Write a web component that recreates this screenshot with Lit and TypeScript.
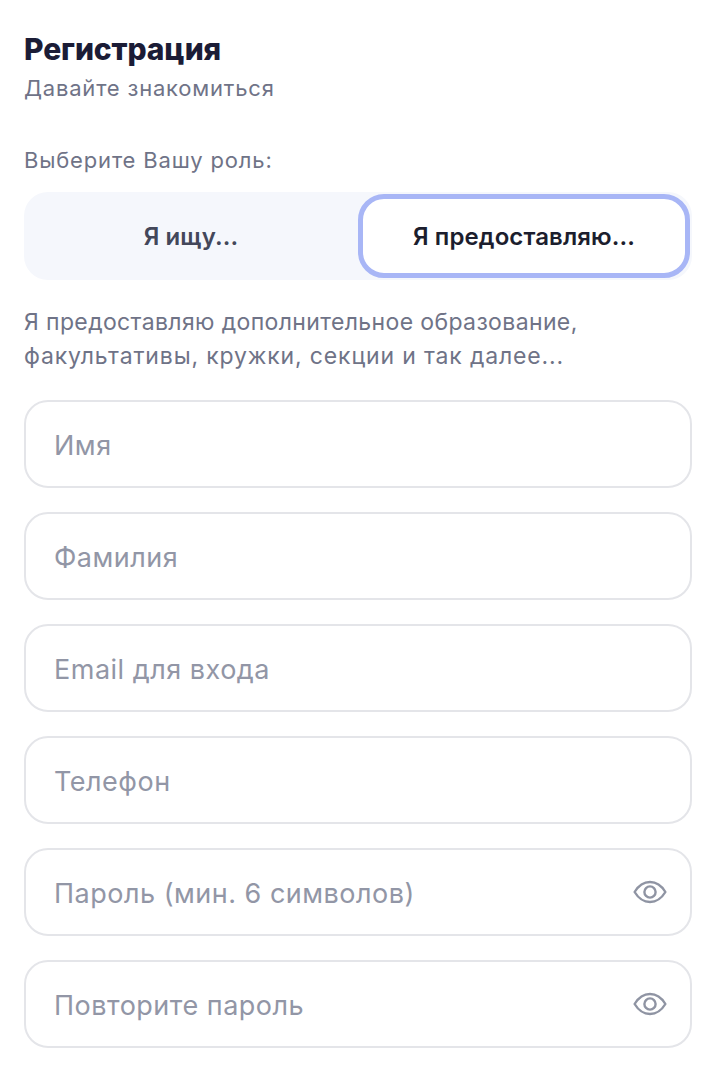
import { LitElement, html, css, svg } from "lit";
import { customElement } from "lit/decorators.js";

const eye = svg`<svg class="eye" viewBox="0 0 34 24" width="34" height="24" fill="none" stroke="#8f94a3" stroke-width="2.4"><path d="M1.6 12C5.5 5.6 10.8 2 17 2s11.5 3.6 15.4 10C28.5 18.4 23.2 22 17 22S5.5 18.4 1.6 12Z" stroke-linejoin="round"/><circle cx="17" cy="12" r="5.6"/></svg>`;

@customElement("app-root")
export class AppRoot extends LitElement {
  static styles = css`
    :host { display: block; width: 714px; height: 1070px; background: #fff; font-family: Inter, "Noto Sans", sans-serif; box-sizing: border-box; padding: 30px 22px 0 24px; overflow: hidden; }
    h1 { margin: 0; font-size: 30px; line-height: 38px; font-weight: 800; color: #1b1c36; letter-spacing: -0.1px; }
    .sub { margin-top: 5px; font-size: 22px; line-height: 30px; color: #6f7387; letter-spacing: 0.8px; }
    .label { margin-top: 42px; font-size: 22px; line-height: 30px; color: #6f7387; letter-spacing: 0.83px; }
    .seg { margin-top: 17px; height: 88px; background: #f5f7fc; border-radius: 24px; display: grid; grid-template-columns: 334px 1fr; }
    .opt { display: flex; align-items: center; justify-content: center; font-size: 24px; font-weight: 600; color: #43475a; letter-spacing: 0.1px; }
    .opt.on { box-sizing: border-box; margin: 2px 2px 2px 0; background: #fff; border: 5px solid #a8b6f6; border-radius: 26px; color: #1c1e2e; }
    .desc { margin: 25px 0 0; font-size: 23px; line-height: 34px; color: #6f7387; }
    .l1 { display: block; letter-spacing: 0.37px; }
    .l2 { display: block; letter-spacing: 0.85px; }
    .form { margin-top: 27px; display: flex; flex-direction: column; gap: 24px; }
    .field { box-sizing: border-box; height: 88px; border: 2px solid #e4e5e9; border-radius: 24px; padding: 0 23px 0 28px; display: flex; align-items: center; justify-content: space-between; font-size: 27px; color: #9296a6; letter-spacing: 0.5px; }
    .field span { padding-top: 2px; }
    .eye { display: block; }
  `;
  render() {
    const fields: [string, boolean][] = [["Имя", false], ["Фамилия", false], ["Email для входа", false], ["Телефон", false], ["Пароль (мин. 6 символов)", true], ["Повторите пароль", true]];
    return html`
      <h1>Регистрация</h1>
      <div class="sub">Давайте знакомиться</div>
      <div class="label">Выберите Вашу роль:</div>
      <div class="seg"><div class="opt">Я ищу...</div><div class="opt on">Я предоставляю...</div></div>
      <p class="desc"><span class="l1">Я предоставляю дополнительное образование,</span><span class="l2">факультативы, кружки, секции и так далее...</span></p>
      <div class="form">${fields.map(([t, e]) => html`<div class="field"><span>${t}</span>${e ? eye : ""}</div>`)}</div>
    `;
  }
}
